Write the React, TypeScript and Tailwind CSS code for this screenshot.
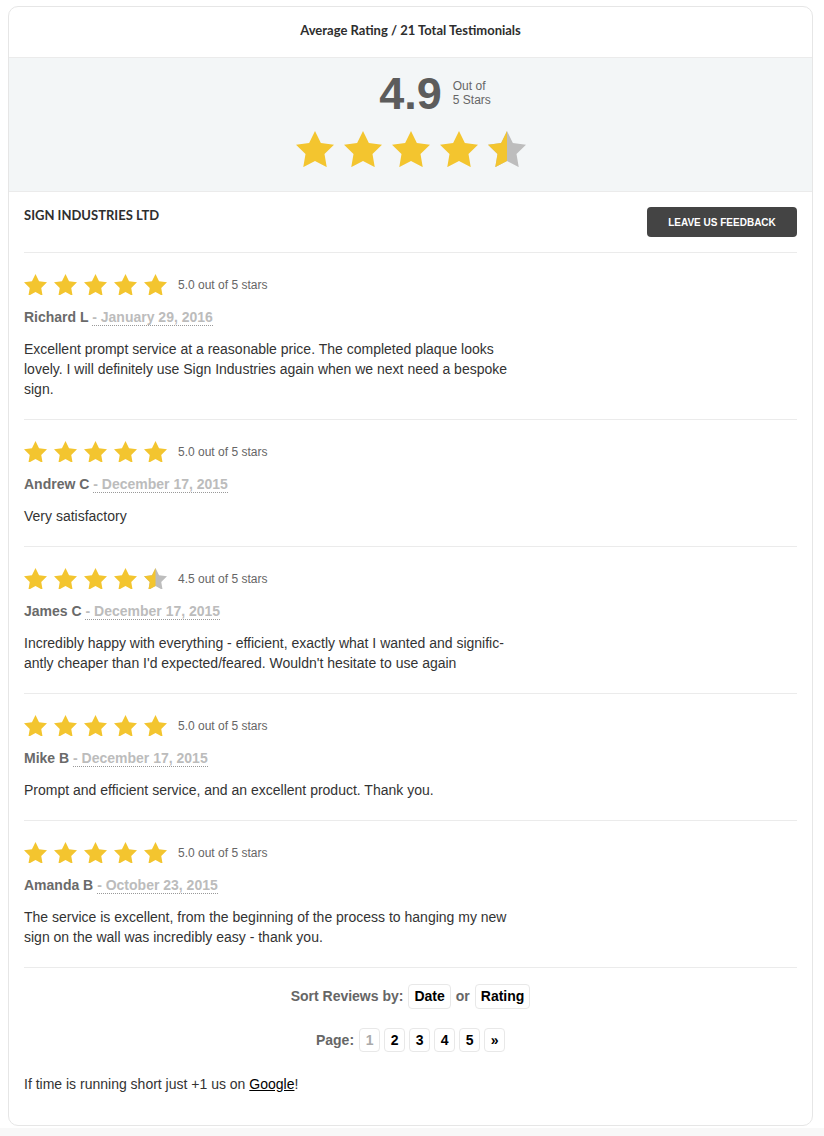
import { useId } from 'react'

const STAR_POINTS = '10,0 13.09,6.26 20,7.27 15,12.14 16.18,19.02 10,15.77 3.82,19.02 5,12.14 0,7.27 6.91,6.26'

const reviews = [
  {
    name: 'Richard L',
    date: 'January 29, 2016',
    rating: 5,
    text: 'Excellent prompt service at a reasonable price. The completed plaque looks lovely. I will definitely use Sign Industries again when we next need a bespoke sign.',
  },
  { name: 'Andrew C', date: 'December 17, 2015', rating: 5, text: 'Very satisfactory' },
  {
    name: 'James C',
    date: 'December 17, 2015',
    rating: 4.5,
    text: "Incredibly happy with everything - efficient, exactly what I wanted and signific\u00ADantly cheaper than I'd expected/feared. Wouldn't hesitate to use again",
  },
  {
    name: 'Mike B',
    date: 'December 17, 2015',
    rating: 5,
    text: 'Prompt and efficient service, and an excellent product. Thank you.',
  },
  {
    name: 'Amanda B',
    date: 'October 23, 2015',
    rating: 5,
    text: 'The service is excellent, from the beginning of the process to hanging my new sign on the wall was incredibly easy - thank you.',
  },
]

function Star({ fill, size }: { fill: 'full' | 'half'; size: number }) {
  const id = useId()
  return (
    <svg width={size} height={size * 0.951} viewBox="0 0 20 19.02" className="block shrink-0">
      {fill === 'half' && (
        <defs>
          <clipPath id={id}>
            <rect x="0" y="0" width="10" height="20" />
          </clipPath>
        </defs>
      )}
      {fill === 'half' ? (
        <>
          <polygon points={STAR_POINTS} fill="#bdbdbd" />
          <polygon points={STAR_POINTS} fill="#f3c52f" clipPath={`url(#${id})`} />
        </>
      ) : (
        <polygon points={STAR_POINTS} fill="#f3c52f" />
      )}
    </svg>
  )
}

function Stars({ rating, size, gap }: { rating: number; size: number; gap: string }) {
  return (
    <div className={`flex items-center ${gap}`}>
      {[1, 2, 3, 4, 5].map((n) => (
        <Star key={n} size={size} fill={rating >= n ? 'full' : 'half'} />
      ))}
    </div>
  )
}

export default function App() {
  return (
    <div className="min-h-screen bg-white pt-[6px] font-['Liberation_Sans',Arial,sans-serif] text-[#333]">
      <div className="ml-[8px] w-[805px] border border-[#e6e6e6] rounded-[10px] bg-white overflow-hidden">
        {/* Header */}
        <div className="h-[51px] flex items-center justify-center border-b border-[#ebebeb]">
          <span className="font-['Lato',sans-serif] font-bold text-[13px] text-[#2e2e2e] mt-[-2px]">
            Average Rating / 21 Total Testimonials
          </span>
        </div>

        {/* Average */}
        <div className="h-[134px] bg-[#f3f6f7] border-b border-[#ebebeb] flex flex-col items-center pt-[13px]">
          <div className="relative">
            <span className="block text-[45px] leading-[45px] font-bold text-[#5c5c5c]">4.9</span>
            <span className="absolute left-full top-[8px] ml-[11px] text-[12px] leading-[14px] text-[#666] whitespace-nowrap">
              Out of
              <br />
              5 Stars
            </span>
          </div>
          <div className="mt-[15px]">
            <Stars rating={4.9} size={38} gap="gap-[10px]" />
          </div>
        </div>

        <div className="px-[15px]">
          {/* Company */}
          <div className="flex justify-between items-start pt-[15px] pb-[15px] border-b border-[#ebebeb]">
            <span className="font-['Lato',sans-serif] font-bold text-[13px] leading-[16px] text-[#2e2e2e] uppercase">
              Sign Industries Ltd
            </span>
            <button className="w-[150px] h-[30px] bg-[#444] rounded-[4px] text-white text-[10px] font-bold uppercase">
              Leave us feedback
            </button>
          </div>

          {/* Reviews */}
          {reviews.map((r) => (
            <div key={r.name} className="pt-[20px] pb-[20px] border-b border-[#ebebeb]">
              <div className="flex items-center h-[23px]">
                <Stars rating={r.rating} size={23} gap="gap-[7px]" />
                <span className="ml-[11px] text-[12px] text-[#666]">{r.rating.toFixed(1)} out of 5 stars</span>
              </div>
              <div className="mt-[11px] text-[14px] leading-[20px] font-bold text-[#6a6a6a]">
                {r.name}{' '}
                <span className="text-[#bcbcbc] border-b border-dotted border-[#999]">- {r.date}</span>
              </div>
              <p className="mt-[12px] w-[500px] text-[14px] leading-[20px] text-[#333]">{r.text}</p>
            </div>
          ))}

          {/* Sort */}
          <div className="pt-[16px] flex items-center justify-center text-[14px] font-bold">
            <span className="text-[#666] mr-[5px]">Sort Reviews by:</span>
            <span className="h-[25px] leading-[23px] px-[5px] border border-[#e8e8e8] rounded-[4px] text-black">Date</span>
            <span className="text-[#666] mx-[5px]">or</span>
            <span className="h-[25px] leading-[23px] px-[5px] border border-[#e8e8e8] rounded-[4px] text-black">Rating</span>
          </div>

          <div className="mt-[19px] flex items-center justify-center gap-[4px] text-[14px] font-bold">
            <span className="text-[#666] mr-[1px]">Page:</span>
            {['1', '2', '3', '4', '5', '»'].map((p) => (
              <span
                key={p}
                className={`h-[24px] leading-[22px] w-[21px] text-center border border-[#e8e8e8] rounded-[4px] ${
                  p === '1' ? 'text-[#aaa]' : 'text-black'
                }`}
              >
                {p}
              </span>
            ))}
          </div>

          <p className="mt-[22px] pb-[31px] text-[14px] leading-[20px] text-[#333]">
            If time is running short just +1 us on <span className="underline text-black">Google</span>!
          </p>
        </div>
      </div>
      <div className="mt-[2px] h-[10px] bg-[#f8f8f8]" />
    </div>
  )
}
